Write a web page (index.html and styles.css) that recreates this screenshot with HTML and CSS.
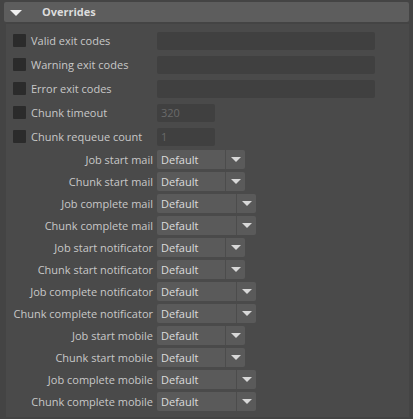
FILE: index.html
```html
<!DOCTYPE html>
<html>
<head>
<meta charset="utf-8">
<link rel="stylesheet" href="styles.css">
</head>
<body>
<div class="section">
  <div class="header"><span class="htri"></span><span class="title">Overrides</span></div>
  <div class="body">
    <div class="checks">
      <div class="crow"><div class="ccell"><span class="cb"></span><span class="clabel">Valid exit codes</span></div><div class="field wide"></div></div>
      <div class="crow"><div class="ccell"><span class="cb"></span><span class="clabel">Warning exit codes</span></div><div class="field wide"></div></div>
      <div class="crow"><div class="ccell"><span class="cb"></span><span class="clabel">Error exit codes</span></div><div class="field wide"></div></div>
      <div class="crow"><div class="ccell"><span class="cb"></span><span class="clabel">Chunk timeout</span></div><div class="field short">320</div></div>
      <div class="crow"><div class="ccell"><span class="cb"></span><span class="clabel">Chunk requeue count</span></div><div class="field short">1</div></div>
    </div>
    <div class="drops">
      <div class="drow"><div class="dlabel">Job start mail</div><div class="combo"><span class="val">Default</span><span class="arrow"><i></i></span></div></div>
      <div class="drow"><div class="dlabel">Chunk start mail</div><div class="combo"><span class="val">Default</span><span class="arrow"><i></i></span></div></div>
      <div class="drow"><div class="dlabel">Job complete mail</div><div class="combo long"><span class="val">Default</span><span class="arrow"><i></i></span></div></div>
      <div class="drow"><div class="dlabel">Chunk complete mail</div><div class="combo long"><span class="val">Default</span><span class="arrow"><i></i></span></div></div>
      <div class="drow"><div class="dlabel">Job start notificator</div><div class="combo"><span class="val">Default</span><span class="arrow"><i></i></span></div></div>
      <div class="drow"><div class="dlabel">Chunk start notificator</div><div class="combo"><span class="val">Default</span><span class="arrow"><i></i></span></div></div>
      <div class="drow"><div class="dlabel">Job complete notificator</div><div class="combo long"><span class="val">Default</span><span class="arrow"><i></i></span></div></div>
      <div class="drow"><div class="dlabel">Chunk complete notificator</div><div class="combo long"><span class="val">Default</span><span class="arrow"><i></i></span></div></div>
      <div class="drow"><div class="dlabel">Job start mobile</div><div class="combo"><span class="val">Default</span><span class="arrow"><i></i></span></div></div>
      <div class="drow"><div class="dlabel">Chunk start mobile</div><div class="combo"><span class="val">Default</span><span class="arrow"><i></i></span></div></div>
      <div class="drow"><div class="dlabel">Job complete mobile</div><div class="combo long"><span class="val">Default</span><span class="arrow"><i></i></span></div></div>
      <div class="drow"><div class="dlabel">Chunk complete mobile</div><div class="combo long"><span class="val">Default</span><span class="arrow"><i></i></span></div></div>
    </div>
  </div>
</div>
</body>
</html>
```
FILE: styles.css
```css
html, body {
  margin: 0;
  padding: 0;
  background: #444444;
  width: 413px;
  height: 419px;
  overflow: hidden;
  font-family: "Open Sans", "Noto Sans", sans-serif;
  font-size: 11px;
  color: #c8c8c8;
}
.section {
  padding-top: 2px;
}
.header {
  margin: 0 4px 0 4px;
  height: 20px;
  background: #5d5d5d;
  border-radius: 2px;
  display: flex;
  align-items: center;
}
.htri {
  margin-left: 6px;
  width: 0;
  height: 0;
  border-left: 6px solid transparent;
  border-right: 6px solid transparent;
  border-top: 6px solid #f0f0f0;
  margin-top: 1px;
}
.title {
  margin-left: 20px;
  font-weight: 700;
  color: #dcdcdc;
  line-height: 20px;
}
.body {
  margin: 2px 4px 0 6px;
  height: 385px;
  padding-top: 8px;
  background: #4a4a4a;
}
.checks {
  display: flex;
  flex-direction: column;
  gap: 6px;
}
.crow {
  display: flex;
  height: 18px;
}
.ccell {
  width: 144px;
  padding-left: 7px;
  display: flex;
  align-items: center;
}
.cb {
  width: 13px;
  height: 13px;
  background: #2b2b2b;
  border-radius: 1px;
  margin-top: -2px;
}
.clabel {
  margin-left: 5px;
  line-height: 18px;
  white-space: nowrap;
}
.field {
  height: 18px;
  background: #404040;
  border-radius: 2px;
  color: #6a6a6a;
  line-height: 18px;
  padding-left: 4px;
  box-sizing: border-box;
}
.field.wide { width: 218px; }
.field.short { width: 58px; }
.drops {
  margin-top: 4px;
  display: flex;
  flex-direction: column;
  gap: 3px;
}
.drow {
  display: flex;
  height: 19px;
  align-items: center;
}
.dlabel {
  width: 147px;
  padding-right: 4px;
  text-align: right;
  white-space: nowrap;
  line-height: 19px;
}
.combo {
  width: 88px;
  height: 19px;
  display: flex;
  background: #5a5a5a;
  border-radius: 2px;
  color: #dcdcdc;
}
.combo.long { width: 99px; }
.val {
  flex: 1;
  padding-left: 4px;
  line-height: 20px;
  border-right: 1px solid #4c4c4c;
}
.arrow {
  width: 19px;
  display: flex;
  align-items: center;
  justify-content: center;
}
.arrow i {
  width: 0;
  height: 0;
  border-left: 5px solid transparent;
  border-right: 5px solid transparent;
  border-top: 5px solid #d8d8d8;
  margin-left: 1px;
}
```
